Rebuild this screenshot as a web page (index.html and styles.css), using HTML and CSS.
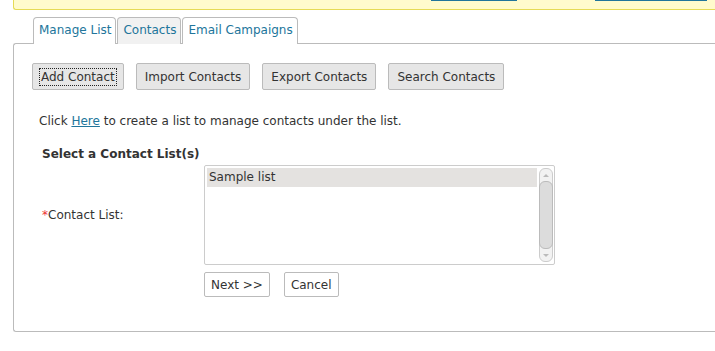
FILE: index.html
```html
<!DOCTYPE html>
<html lang="en">
<head>
    <meta charset="UTF-8">
    <title>Contacts</title>
    <link rel="stylesheet" href="styles.css">
</head>
<body>

    <!-- Update notice (scrolled out of view, only link underlines show) -->
    <div class="notice">
        <span class="notice-line one"></span>
        <span class="notice-line two"></span>
    </div>

    <!-- Tabs -->
    <div class="tabs">
        <a href="#" class="tab">Manage List</a>
        <a href="#" class="tab active">Contacts</a>
        <a href="#" class="tab">Email Campaigns</a>
    </div>

    <!-- Panel -->
    <div class="panel">
        <div class="actions">
            <button class="btn focused"><span>Add Contact</span></button>
            <button class="btn">Import Contacts</button>
            <button class="btn">Export Contacts</button>
            <button class="btn">Search Contacts</button>
        </div>

        <p class="hint">Click <a href="#">Here</a> to create a list to manage contacts under the list.</p>

        <h3 class="form-title">Select a Contact List(s)</h3>

        <div class="form-row">
            <label class="form-label"><span class="req">*</span>Contact List:</label>
            <div class="listbox">
                <div class="listbox-items">
                    <div class="listbox-item selected">Sample list</div>
                </div>
                <div class="scrollbar">
                    <div class="arrow up"></div>
                    <div class="thumb"></div>
                    <div class="arrow down"></div>
                </div>
            </div>
        </div>

        <div class="form-buttons">
            <button class="btn small">Next &gt;&gt;</button>
            <button class="btn small">Cancel</button>
        </div>
    </div>

</body>
</html>
```

FILE: styles.css
```css
/* General Reset */
* {
    margin: 0;
    padding: 0;
    box-sizing: border-box;
}

body {
    background: #fff;
    color: #333;
    font-family: 'DejaVu Sans', sans-serif;
    font-size: 12px;
    padding-left: 13px;
    overflow: hidden;
}

/* Notice */
.notice {
    position: relative;
    height: 10px;
    background: #fffbcc;
    border-bottom: 1px solid #e6db55;
    border-left: 1px solid #e6db55;
    border-bottom-left-radius: 3px;
}

.notice-line {
    position: absolute;
    top: 0;
    height: 1px;
    background: #21759b;
}

.notice-line.one {
    left: 417px;
    width: 86px;
}

.notice-line.two {
    left: 581px;
    width: 112px;
}

/* Tabs */
.tabs {
    display: flex;
    padding: 7px 0 0 20px;
    gap: 1px;
}

.tab {
    display: block;
    height: 27px;
    padding: 5px 4px 0 5px;
    border: 1px solid #bbb;
    border-bottom: none;
    border-radius: 4px 4px 0 0;
    background: #fff;
    color: #21759b;
    text-decoration: none;
    margin-bottom: -1px;
    position: relative;
}

.tab.active {
    background: #f1f1f1;
}

/* Panel */
.panel {
    border: 1px solid #bbb;
    border-right: none;
    border-radius: 3px 0 0 3px;
    height: 289px;
    padding: 19px 0 0 18px;
}

.actions {
    display: flex;
    gap: 12px;
}

.btn {
    height: 27px;
    padding: 0 8px;
    background: #e6e6e6;
    border: 1px solid #bbb;
    border-radius: 2px;
    color: #333;
    font-family: 'DejaVu Sans', sans-serif;
    font-size: 12px;
}

.btn.focused span {
    outline: 1px dotted #222;
    outline-offset: 1px;
}

.hint {
    margin: 22px 0 0 7px;
    line-height: 18px;
}

.hint a {
    color: #21759b;
}

.form-title {
    margin: 15px 0 0 10px;
    font-size: 12px;
    font-weight: bold;
    line-height: 18px;
}

.form-row {
    display: flex;
    align-items: center;
    margin-top: 2px;
}

.form-label {
    width: 172px;
    padding-left: 10px;
}

.req {
    color: #e33;
}

/* Listbox */
.listbox {
    display: flex;
    width: 351px;
    height: 100px;
    border: 1px solid #ccc;
    border-radius: 2px;
    padding: 2px 1px 2px 2px;
    background: #fff;
}

.listbox-items {
    flex: 1;
}

.listbox-item {
    height: 19px;
    padding: 0 2px;
    line-height: 19px;
}

.listbox-item.selected {
    background: #e4e2e0;
}

.scrollbar {
    width: 14px;
    margin-left: 2px;
    display: flex;
    flex-direction: column;
    border: 1px solid #ccc;
    border-radius: 6px;
    background: #f2f2f2;
}

.arrow {
    height: 12px;
    display: flex;
    align-items: center;
    justify-content: center;
}

.arrow::before {
    content: '';
    border-left: 3px solid transparent;
    border-right: 3px solid transparent;
}

.arrow.up::before {
    border-bottom: 3px solid #bbb;
}

.arrow.down::before {
    border-top: 3px solid #bbb;
}

.thumb {
    flex: 1;
    background: #dcdcdc;
    border: 1px solid #bbb;
    border-radius: 6px;
    margin: 0 -1px;
}

.form-buttons {
    display: flex;
    gap: 14px;
    margin: 7px 0 0 172px;
}

.btn.small {
    height: 25px;
    background: #fff;
    padding: 0 6px;
}
```
